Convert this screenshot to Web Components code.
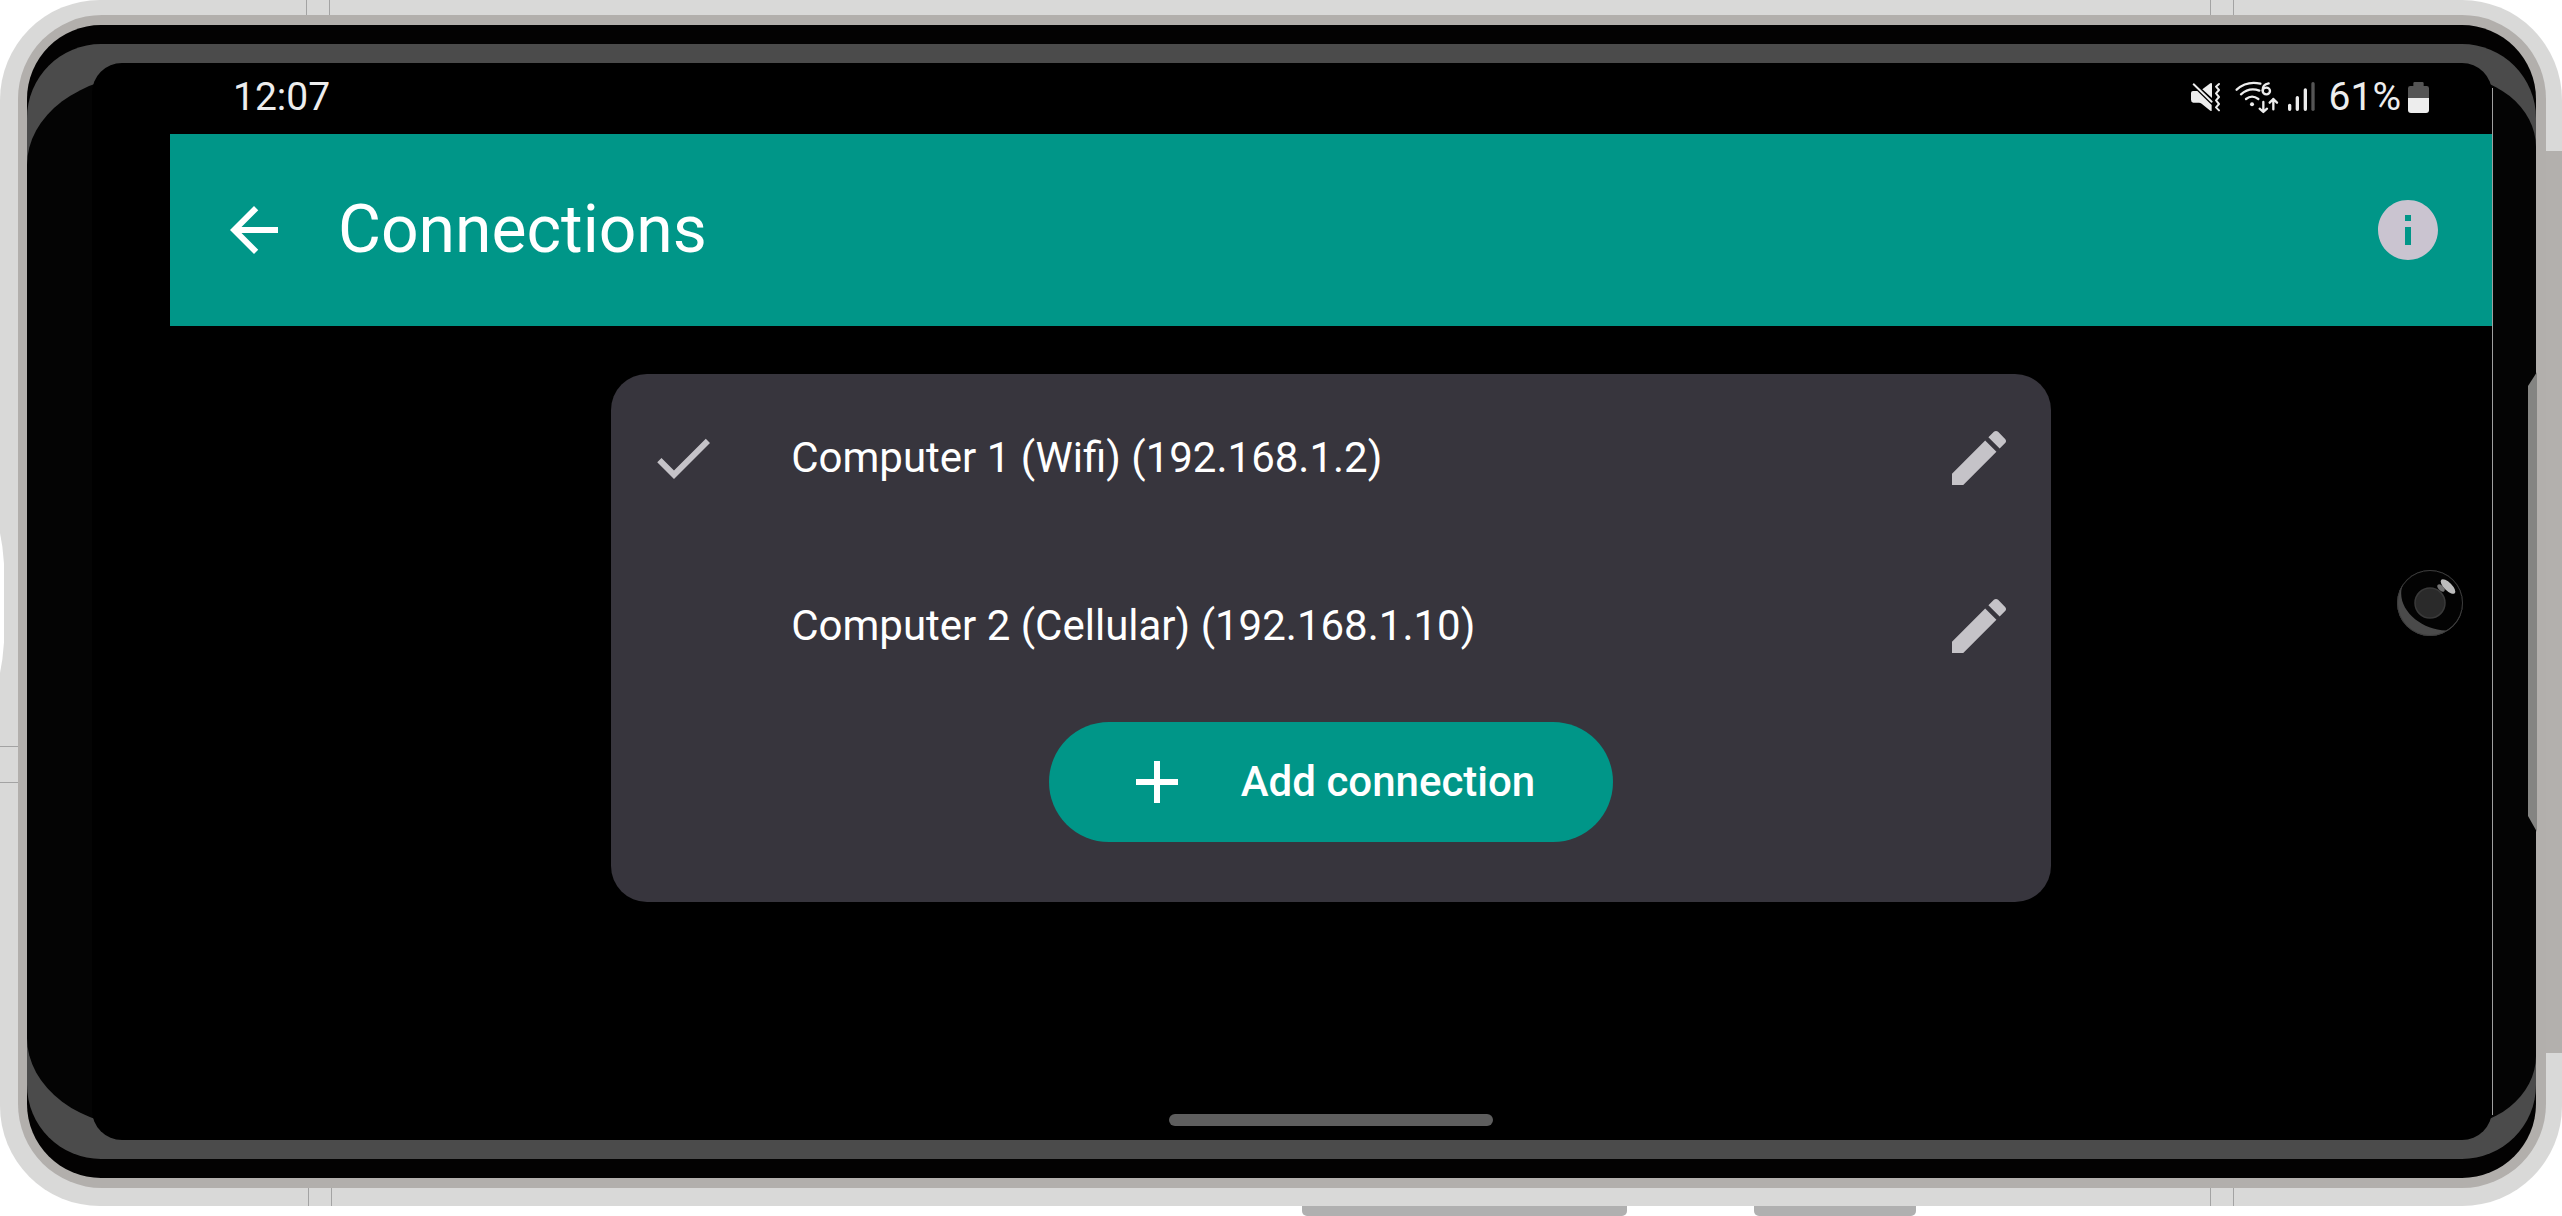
<!DOCTYPE html>
<html lang="en">
<head>
<meta charset="utf-8">
<title>Connections</title>
<style>
html, body { margin: 0; background: #fff; }
body { font-family: Roboto, "Liberation Sans", sans-serif; color: #fff; }
</style>
</head>
<body>
<phone-frame>
  <status-bar time="12:07" battery="61%"></status-bar>
  <app-bar>Connections</app-bar>
  <connection-card>
    <connection-row selected>Computer 1 (Wifi) (192.168.1.2)</connection-row>
    <connection-row>Computer 2 (Cellular) (192.168.1.10)</connection-row>
    <add-button slot="action">Add connection</add-button>
  </connection-card>
</phone-frame>
<script>
const define = (name, html) => {
  const template = document.createElement('template');
  template.innerHTML = html;
  customElements.define(name, class extends HTMLElement {
    constructor() {
      super();
      this.attachShadow({ mode: 'open' }).append(template.content.cloneNode(true));
    }
    connectedCallback() {
      this.shadowRoot.querySelectorAll('[data-from]').forEach(n => {
        n.textContent = this.getAttribute(n.dataset.from);
      });
    }
  });
};

define('phone-frame', `
<style>
  :host { display: flex; flex-direction: column; min-height: 100vh; }
  * { box-sizing: border-box; }
  .shell {
    --seam: linear-gradient(#a3a3a3, #a3a3a3);
    position: relative; flex: 1; display: flex; padding: 15px 16px 18px 18px;
    border-radius: 100px;
    background:
      var(--seam) 306px 0 / 1px 15px, var(--seam) 329px 0 / 1px 15px,
      var(--seam) right 351px top 0 / 1px 15px, var(--seam) right 328px top 0 / 1px 15px,
      var(--seam) left 308px bottom 0 / 1px 18px, var(--seam) left 331px bottom 0 / 1px 18px,
      var(--seam) right 351px bottom 0 / 1px 18px, var(--seam) right 328px bottom 0 / 1px 18px,
      var(--seam) 0 746px / 18px 1px, var(--seam) 0 782px / 18px 1px,
      linear-gradient(#b3b0ad, #b3b0ad) right 0 top 151px / 16px 902px,
      #d9d9d8;
    background-repeat: no-repeat;
  }
  .notch { position: absolute; left: 0; top: 533px; width: 4px; height: 140px; background: #fff;
    clip-path: polygon(0 0, 60% 10%, 100% 22%, 100% 78%, 60% 90%, 0 100%); }
  .power { position: absolute; right: 25px; top: 372px; width: 9px; height: 460px; background: #848482;
    clip-path: polygon(100% 0, 0 14px, 0 444px, 100% 100%); }
  .bezel { flex: 1; display: flex; padding: 10px 10px 10px 9px; border-radius: 84px; background: #b2afac; }
  .rim { flex: 1; display: flex; padding: 19px 0; border-radius: 74px; background: #030202; }
  .glass { position: relative; flex: 1; display: flex; padding: 19px 44px 19px 65px;
    border-radius: 74px; background: #4b4b4b; overflow: hidden; }
  .panel { position: absolute; inset: 31px 0; background: #040404;
    border-radius: 120px 90px 90px 120px / 90px 72px 72px 90px; }
  .edge { position: absolute; right: 43px; top: 44px; bottom: 44px; width: 1px; background: #a0a0a0; }
  .screen { position: relative; flex: 1; display: flex; flex-direction: column;
    padding-left: 78px; border-radius: 30px; background: #000; overflow: hidden; }
  .home { width: 324px; height: 12px; margin: auto auto 14px; border-radius: 6px; background: #5e5e5e; }
  .camera { position: absolute; right: 28px; top: 506px; width: 68px; height: 68px; }
  .keys { display: flex; gap: 127px; height: 10px; padding-left: 1302px; }
  .keys i { width: 162px; border-radius: 0 0 5px 5px; background: #b0b0b0; }
  .keys i:first-child { width: 325px; }
</style>
<div class="shell">
  <div class="bezel"><div class="rim"><div class="glass">
    <div class="panel"></div>
    <div class="edge"></div>
    <div class="screen">
      <slot></slot>
      <div class="home"></div>
      <svg class="camera" viewBox="0 0 68 68" aria-hidden="true">
        <circle cx="34" cy="34" r="33" fill="#4a4a4a"/>
        <path d="M7 15A33 33 0 0 1 67 34A33 33 0 0 1 50 61.500C24 61 -2 38 7 15Z" fill="#030303"/>
        <circle cx="34" cy="34" r="32.500" fill="none" stroke="#3c3c3c"/>
        <circle cx="34" cy="34" r="15" fill="#2a2a2a" stroke="#3a3a3a" stroke-width="1.500"/>
        <ellipse cx="52" cy="17.500" rx="9.500" ry="4" transform="rotate(45 52 17.500)" fill="#bdbdbd"/>
        <ellipse cx="45" cy="19" rx="4.500" ry="2.500" transform="rotate(45 45 19)" fill="#757575"/>
      </svg>
    </div>
  </div></div></div>
  <div class="notch"></div>
  <div class="power"></div>
</div>
<div class="keys"><i></i><i></i></div>
`);

define('status-bar', `
<style>
  :host { display: flex; align-items: center; height: 71px; padding: 0 62px 3px 63px; box-sizing: border-box;
    color: #ededed; font-size: 39px; line-height: 48px; }
  svg { display: block; flex: none; }
  .icons { display: flex; align-items: center; margin-left: auto; }
  .mute { margin-right: 12px; }
  .wifi { margin-right: 7px; }
  .signal { margin-right: 12px; }
  .battery { margin-left: 6px; }
</style>
<span data-from="time"></span>
<div class="icons">
  <svg class="mute" width="32" height="34" viewBox="60 30 96 102" fill="#ededed" aria-hidden="true">
    <path d="M63 69Q63 63 69 63H82L125 105V122Q123 124 119 121L95 101Q91 98 87 98H70Q63 97 63 89Z"/>
    <path d="M97 58L121 40Q126 38 126 42V84Z"/>
    <path d="M71 43L125 95" stroke="#ededed" stroke-width="6" stroke-linecap="round"/>
    <path d="M147 42L138 50L147 60L138 70L147 81L138 91L147 102L138 112L147 121" fill="none" stroke="#ededed" stroke-width="6" stroke-linecap="round" stroke-linejoin="round"/>
  </svg>
  <svg class="wifi" width="46" height="34" viewBox="192 30 138 102" fill="none" stroke="#ededed" stroke-width="7" stroke-linecap="round" stroke-linejoin="round" aria-hidden="true">
    <path d="M200 59Q230 32 271 41"/>
    <path d="M213 73Q238 51 268 62"/>
    <path d="M228 87Q246 73 265 87"/>
    <circle cx="246" cy="103" r="6" fill="#ededed" stroke="none"/>
    <path d="M296 40Q277 43 278 61"/>
    <ellipse cx="289" cy="63" rx="11" ry="10"/>
    <path d="M280 96V125M269 116L280 126L291 116"/>
    <path d="M310 118V87M299 98L310 87L321 98"/>
  </svg>
  <svg class="signal" width="30" height="34" viewBox="351 30 90 102" stroke="#ededed" stroke-width="10" stroke-linecap="round" aria-hidden="true">
    <path d="M359 106V118M382 83V118M406 60V118"/>
    <path d="M429 41V118" stroke="#555"/>
  </svg>
  <span data-from="battery"></span>
  <svg class="battery" width="23" height="34" viewBox="711 30 69 102" aria-hidden="true">
    <path d="M714 84V55Q714 48 721 48H730V40Q730 36 734 36H757Q761 36 761 40V48H770Q777 48 777 55V84Z" fill="#555"/>
    <path d="M714 84H777V120Q777 129 768 129H723Q714 129 714 120Z" fill="#ededed"/>
  </svg>
</div>
`);

define('app-bar', `
<style>
  :host { display: flex; align-items: center; height: 192px; padding: 0 48px; box-sizing: border-box; background: #009688; }
  button { display: block; flex: none; border: 0; padding: 0; background: none; color: inherit; cursor: pointer; }
  svg { display: block; fill: currentColor; }
  h1 { flex: 1; margin: 0 0 0 48px; font-size: 66px; line-height: 84px; font-weight: 400; }
  .info { color: #cac4d0; }
</style>
<button aria-label="Back"><svg width="72" height="72" viewBox="0 0 24 24"><path d="M20 11H7.830l5.590-5.590L12 4l-8 8 8 8 1.410-1.410L7.830 13H20v-2z"/></svg></button>
<h1><slot></slot></h1>
<button class="info" aria-label="Information"><svg width="72" height="72" viewBox="0 0 24 24"><path d="M12 2C6.480 2 2 6.480 2 12s4.480 10 10 10 10-4.480 10-10S17.520 2 12 2zm1 15h-2v-6h2v6zm0-8h-2V7h2v2z"/></svg></button>
`);

define('connection-card', `
<style>
  :host { display: flex; flex-direction: column; width: 62%; margin: 48px auto 0; padding-bottom: 60px;
    box-sizing: border-box; border-radius: 36px; background: #37353d; }
  .action { display: flex; justify-content: center; padding-top: 12px; }
</style>
<slot></slot>
<div class="action"><slot name="action"></slot></div>
`);

define('connection-row', `
<style>
  :host { display: flex; align-items: center; height: 168px; padding: 0 36px; box-sizing: border-box; font-size: 42px; line-height: 60px; }
  svg { display: block; flex: none; fill: #c5c3c8; }
  .check { visibility: hidden; margin-right: 72px; }
  :host([selected]) .check { visibility: visible; }
  span { flex: 1; }
  button { border: 0; padding: 0; background: none; cursor: pointer; }
</style>
<svg class="check" width="72" height="72" viewBox="0 0 24 24" aria-hidden="true"><path d="M9 16.170L4.830 12l-1.420 1.410L9 19 21 7l-1.410-1.410z"/></svg>
<span><slot></slot></span>
<button aria-label="Edit connection"><svg width="72" height="72" viewBox="0 0 24 24"><path d="M3 17.250V21h3.750L17.810 9.940l-3.750-3.750L3 17.250zM20.710 7.040c.390-.390.390-1.020 0-1.410l-2.340-2.340c-.390-.390-1.020-.390-1.410 0l-1.830 1.830 3.750 3.750 1.830-1.830z"/></svg></button>
`);

define('add-button', `
<style>
  :host { display: block; }
  button { display: flex; align-items: center; gap: 48px; height: 120px; padding: 0 78px 0 72px; border: 0; border-radius: 60px;
    background: #009688; color: #fff; font-family: inherit; font-size: 42px; line-height: 60px; font-weight: 500; cursor: pointer; }
  svg { display: block; fill: currentColor; }
</style>
<button><svg width="72" height="72" viewBox="0 0 24 24" aria-hidden="true"><path d="M19 13h-6v6h-2v-6H5v-2h6V5h2v6h6v2z"/></svg><slot></slot></button>
`);
</script>
</body>
</html>
